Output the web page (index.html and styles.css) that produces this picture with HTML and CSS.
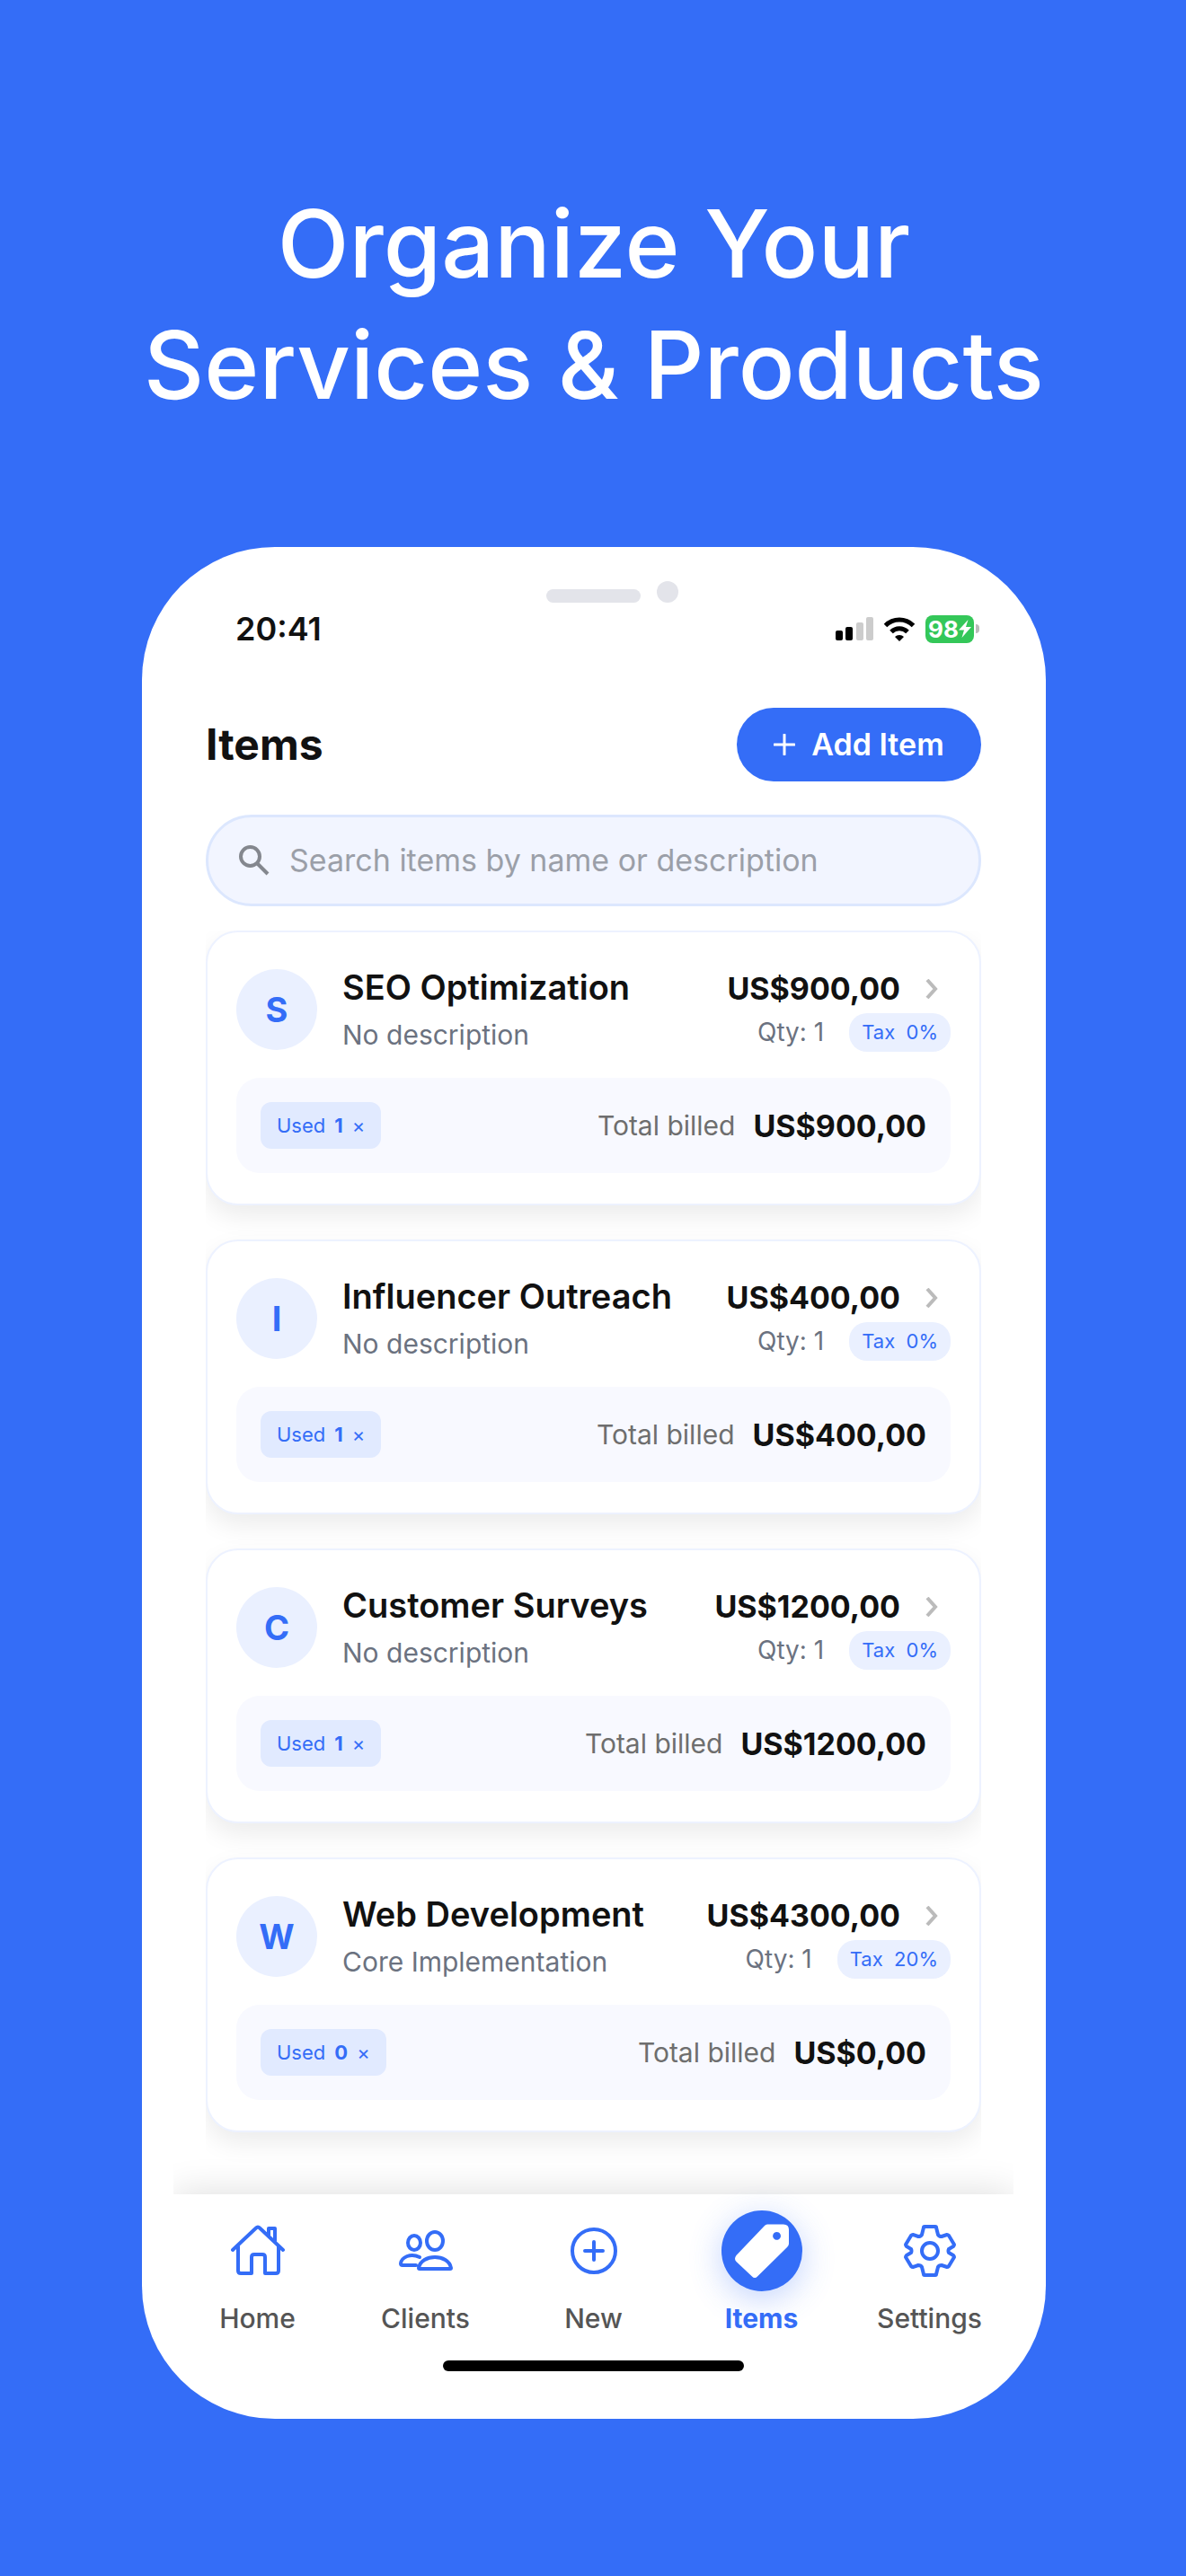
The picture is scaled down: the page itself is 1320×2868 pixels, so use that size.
FILE: index.html
```html
<!DOCTYPE html>
<html lang="en">
<head>
<meta charset="utf-8">
<title>Items</title>
<meta name="viewport" content="width=device-width, initial-scale=1">
<link rel="stylesheet" href="styles.css">
</head>
<body>
<main class="poster">
  <h1 class="headline">Organize Your<br>Services &amp; Products</h1>

  <div class="phone">
    <div class="sensors"><span class="speaker"></span><span class="camera"></span></div>

    <div class="status">
      <span class="clock">20:41</span>
      <div class="indicators">
        <svg class="signal" viewBox="0 0 42 26" aria-hidden="true">
          <rect x="0" y="15" width="8" height="11" rx="2"/><rect x="11" y="11" width="8" height="15" rx="2"/>
          <g fill="#ccc"><rect x="23" y="6" width="8" height="20" rx="2"/><rect x="34" y="0" width="8" height="26" rx="2"/></g>
        </svg>
        <svg class="wifi" viewBox="0 0 36 27" aria-hidden="true">
          <path d="M18 27l-5-5a7 7 0 0 1 10 0z"/>
          <path d="M9 16.500a12.500 12.500 0 0 1 18 0M2.500 9.500a22 22 0 0 1 31 0" fill="none" stroke="#000" stroke-width="5"/>
        </svg>
        <div class="battery"><span class="level">98<svg viewBox="0 0 14 20" aria-hidden="true"><path d="M10.500 0L0 11.500h6L3.500 20 14 8H8z"/></svg></span><span class="tip"></span></div>
      </div>
    </div>

    <div class="screen">
      <header class="topbar">
        <h2 class="title">Items</h2>
        <button class="add" type="button">
          <svg viewBox="0 0 24 24" aria-hidden="true"><path d="M12 1v22M1 12h22"/></svg>
          Add Item
        </button>
      </header>

      <label class="search">
        <svg viewBox="0 0 34 34" aria-hidden="true"><circle cx="12.500" cy="12.500" r="10.500"/><path d="M20 20l12 12"/></svg>
        <input type="search" aria-label="Search items" placeholder="Search items by name or description">
      </label>

      <section class="list">
        <article class="card">
          <div class="summary">
            <span class="avatar">S</span>
            <div class="info"><h3 class="name">SEO Optimization</h3><p class="desc">No description</p></div>
            <div class="pricing">
              <div class="price">US$900,00<svg viewBox="0 0 14 22" aria-hidden="true"><path d="M2 1l9 10-9 10"/></svg></div>
              <div class="meta"><span>Qty: 1</span><span class="tax">Tax&nbsp; 0%</span></div>
            </div>
          </div>
          <div class="usage"><span class="used">Used <b>1</b> ×</span><span class="label">Total billed</span><span class="total">US$900,00</span></div>
        </article>
        <article class="card">
          <div class="summary">
            <span class="avatar">I</span>
            <div class="info"><h3 class="name">Influencer Outreach</h3><p class="desc">No description</p></div>
            <div class="pricing">
              <div class="price">US$400,00<svg viewBox="0 0 14 22" aria-hidden="true"><path d="M2 1l9 10-9 10"/></svg></div>
              <div class="meta"><span>Qty: 1</span><span class="tax">Tax&nbsp; 0%</span></div>
            </div>
          </div>
          <div class="usage"><span class="used">Used <b>1</b> ×</span><span class="label">Total billed</span><span class="total">US$400,00</span></div>
        </article>
        <article class="card">
          <div class="summary">
            <span class="avatar">C</span>
            <div class="info"><h3 class="name">Customer Surveys</h3><p class="desc">No description</p></div>
            <div class="pricing">
              <div class="price">US$1200,00<svg viewBox="0 0 14 22" aria-hidden="true"><path d="M2 1l9 10-9 10"/></svg></div>
              <div class="meta"><span>Qty: 1</span><span class="tax">Tax&nbsp; 0%</span></div>
            </div>
          </div>
          <div class="usage"><span class="used">Used <b>1</b> ×</span><span class="label">Total billed</span><span class="total">US$1200,00</span></div>
        </article>
        <article class="card">
          <div class="summary">
            <span class="avatar">W</span>
            <div class="info"><h3 class="name">Web Development</h3><p class="desc">Core Implementation</p></div>
            <div class="pricing">
              <div class="price">US$4300,00<svg viewBox="0 0 14 22" aria-hidden="true"><path d="M2 1l9 10-9 10"/></svg></div>
              <div class="meta"><span>Qty: 1</span><span class="tax">Tax&nbsp; 20%</span></div>
            </div>
          </div>
          <div class="usage"><span class="used">Used <b>0</b> ×</span><span class="label">Total billed</span><span class="total">US$0,00</span></div>
        </article>
      </section>
    </div>

    <div class="navwrap">
      <nav class="tabs">
        <a class="tab" href="#home"><span class="icon"><svg viewBox="0 0 60 60" aria-hidden="true"><path d="M2 29L28 4.500q2-2 4 0L58 29M8 25v27q0 3 3 3h12V37q0-3 3-3h9q3 0 3 3v18h12q3 0 3-3V25M42 13V5h7v14"/></svg></span>Home</a>
        <a class="tab" href="#clients"><span class="icon"><svg viewBox="0 0 60 60" aria-hidden="true"><ellipse cx="17" cy="21" rx="7" ry="8"/><ellipse cx="40" cy="19" rx="9" ry="10"/><path d="M23 37C13 32 3 37 2 44q0 2 2 2h15M22 49c3-16 33-16 36 0q0 1-1 1H23q-1 0-1-1z"/></svg></span>Clients</a>
        <a class="tab" href="#new"><span class="icon"><svg viewBox="0 0 60 60" aria-hidden="true"><circle cx="30" cy="30" r="24"/><path d="M30 20v20M20 30h20"/></svg></span>New</a>
        <a class="tab active" href="#items" aria-current="page"><span class="icon"><svg viewBox="0 0 60 60" aria-hidden="true"><path class="solid" fill-rule="evenodd" d="M36 0.500h18q6 0 6 6V22q0 2-2 4L25 58.500q-3 3-6 0L1.500 42q-3-3 0-7L33 2q1-1.500 3-1.500zM46.500 9a4.400 4.400 0 1 0 .1 0z"/></svg></span>Items</a>
        <a class="tab" href="#settings"><span class="icon"><svg viewBox="0 0 60 60" aria-hidden="true"><circle cx="30" cy="30" r="9"/><path d="M24 3h12q1 0 1 1l2 8q1 2 4 2l6-2q1 0 2 1l6 10q0 1-1 2l-5 3q-1 2 0 4l5 3q1 1 1 2l-6 10q-1 1-2 1l-6-2q-3 0-4 2l-2 8q0 1-1 1H24q-1 0-1-1l-2-8q-1-2-4-2l-6 2q-1 0-2-1L3 37q0-1 1-2l5-3q1-2 0-4l-5-3q-1-1-1-2l6-10q1-1 2-1l6 2q3 0 4-2l2-8q0-1 1-1z"/></svg></span>Settings</a>
      </nav>
    </div>
    <div class="homebar"></div>
  </div>
</main>
</body>
</html>
```
FILE: styles.css
```css
* { box-sizing: border-box; }

body {
  margin: 0;
  background: #346df7;
  color: #111;
  font-family: Inter, "Liberation Sans", sans-serif;
}

h1, h2, h3, p { margin: 0; }

.poster {
  min-height: 100vh;
  padding: 204px 156px 175px 158px;
}

.headline {
  color: #fff;
  font-size: 104px;
  font-weight: 500;
  line-height: 135px;
  text-align: center;
  white-space: nowrap;
}

.phone {
  margin-top: 135px;
  padding: 38px 36px 53px 35px;
  background: #fff;
  border-radius: 148px;
}

.sensors {
  display: flex;
  justify-content: center;
  align-items: flex-end;
  gap: 18px;
  height: 24px;
  padding-left: 42px;
}
.speaker { width: 105px; height: 15px; border-radius: 8px; background: #e3e4ea; }
.camera { width: 24px; height: 24px; border-radius: 50%; background: #e3e4ea; }

.status {
  display: flex;
  justify-content: space-between;
  align-items: center;
  height: 58px;
  padding: 0 38px 0 69px;
}
.clock { font-size: 36px; font-weight: 600; line-height: 44px; }
.indicators { display: flex; align-items: center; gap: 11px; }
.signal { width: 42px; height: 26px; }
.wifi { width: 36px; height: 27px; }
.battery { display: flex; align-items: center; gap: 2px; }
.level {
  display: flex;
  align-items: center;
  justify-content: center;
  width: 54px;
  height: 31px;
  border-radius: 8px;
  background: #34c759;
  color: #fff;
  font-size: 26px;
  font-weight: 700;
}
.level svg { width: 14px; height: 20px; fill: #fff; }
.tip { width: 4px; height: 10px; border-radius: 0 4px 4px 0; background: #bbb; }

.screen { padding: 59px 36px 0; }

.topbar { display: flex; justify-content: space-between; align-items: center; }
.title { font-size: 48px; font-weight: 700; line-height: 56px; }
.add {
  display: flex;
  justify-content: center;
  align-items: center;
  gap: 18px;
  width: 272px;
  height: 82px;
  padding: 0;
  border: 0;
  border-radius: 41px;
  background: #346df7;
  color: #fff;
  font: 600 34px/40px Inter, "Liberation Sans", sans-serif;
}
.add svg { width: 24px; height: 24px; fill: none; stroke: #fff; stroke-width: 3; stroke-linecap: round; }

.search {
  display: flex;
  align-items: center;
  gap: 22px;
  height: 102px;
  margin-top: 37px;
  padding: 0 34px;
  border: 3px solid #dce7fe;
  border-radius: 51px;
  background: #f2f5ff;
}
.search svg { flex: none; width: 34px; height: 34px; fill: none; stroke: #84878e; stroke-width: 4; }
.search input {
  flex: 1;
  min-width: 0;
  padding: 0;
  border: 0;
  outline: 0;
  background: none;
  color: #111;
  font: 400 34px/44px Inter, "Liberation Sans", sans-serif;
}
.search input::placeholder { color: #9b9fa8; opacity: 1; }

.list {
  display: flex;
  flex-direction: column;
  gap: 38px;
  margin-top: 27px;
  padding-bottom: 69px;
  overflow: hidden;
}

.card {
  padding: 30px 32px 34px;
  border: 2px solid #edf2ff;
  border-radius: 36px;
  background: #fff;
  box-shadow: 0 12px 28px rgba(0, 0, 0, 0.08);
}
.summary { display: flex; align-items: center; height: 108px; }
.avatar {
  flex: none;
  width: 90px;
  height: 90px;
  margin-top: 4px;
  border-radius: 50%;
  background: #eaf0ff;
  color: #346df7;
  font-size: 38px;
  font-weight: 700;
  line-height: 90px;
  text-align: center;
}
.info { flex: 1; margin-left: 28px; white-space: nowrap; }
.name { font-size: 38px; font-weight: 600; line-height: 60px; }
.desc { color: #6b7280; font-size: 30px; line-height: 46px; }
.pricing { display: flex; flex-direction: column; align-items: flex-end; }
.price {
  display: flex;
  align-items: center;
  gap: 28px;
  padding-right: 14px;
  font-size: 34px;
  font-weight: 700;
  line-height: 54px;
}
.price svg { width: 14px; height: 22px; fill: none; stroke: #bbb; stroke-width: 4; }
.meta { display: flex; align-items: center; gap: 28px; color: #6b7280; font-size: 28px; }
.tax {
  padding: 0 14px;
  border-radius: 20px;
  background: #eaf0ff;
  color: #346df7;
  font-size: 22px;
  line-height: 43px;
}

.usage {
  display: flex;
  align-items: center;
  height: 106px;
  margin-top: 24px;
  padding: 0 27px;
  border-radius: 26px;
  background: #f8f9ff;
}
.used {
  display: flex;
  gap: 10px;
  margin-right: auto;
  padding: 0 18px;
  border-radius: 12px;
  background: #e1eaff;
  color: #346df7;
  font-size: 22px;
  line-height: 52px;
}
.label { color: #6e6e6e; font-size: 30px; }
.total { margin-left: 20px; font-size: 34px; font-weight: 700; }

.navwrap { padding-top: 40px; margin-top: -40px; overflow: hidden; }
.tabs {
  display: grid;
  grid-template-columns: repeat(5, 1fr);
  padding-top: 18px;
  background: #fff;
  box-shadow: 0 0 40px rgba(0, 0, 0, 0.14);
}
.tab {
  display: flex;
  flex-direction: column;
  align-items: center;
  gap: 11px;
  height: 167px;
  color: #555;
  font-size: 30px;
  font-weight: 500;
  line-height: 38px;
  text-decoration: none;
}
.icon { display: flex; justify-content: center; align-items: center; width: 90px; height: 90px; border-radius: 50%; }
.icon svg { width: 60px; height: 60px; fill: none; stroke: #346df7; stroke-width: 4; stroke-linecap: round; stroke-linejoin: round; }
.active { color: #346df7; font-weight: 700; }
.active .icon { background: #346df7; box-shadow: 0 8px 36px rgba(52, 109, 247, 0.3); }
.icon .solid { fill: #fff; stroke: none; }

.homebar { width: 335px; height: 12px; margin: 0 auto; border-radius: 6px; background: #000; }
```
